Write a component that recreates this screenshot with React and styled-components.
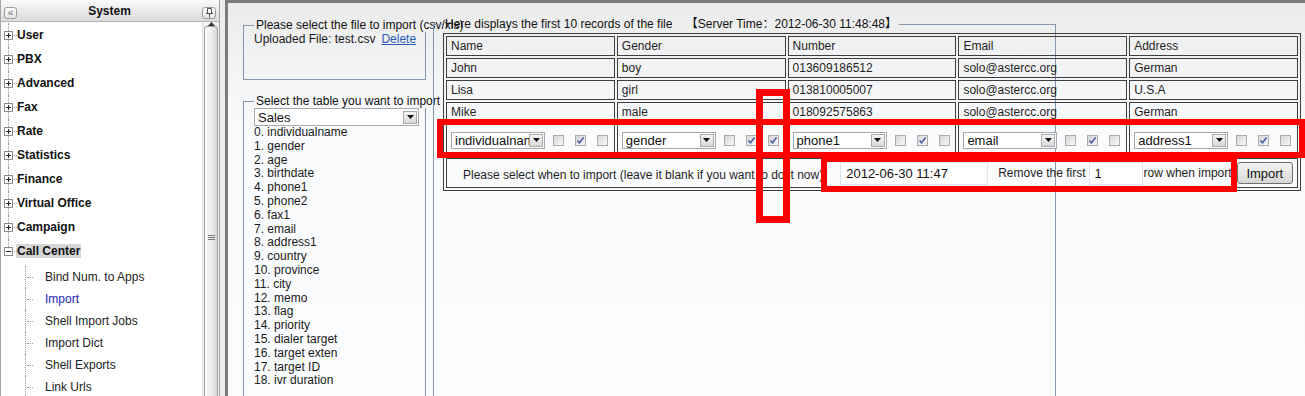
import React from 'react';
import styled, { createGlobalStyle } from 'styled-components';

const GlobalStyle = createGlobalStyle`
  html, body {
    margin: 0;
    padding: 0;
    background: #ffffff;
  }
  body {
    font-family: "Liberation Sans", Arial, "Noto Sans CJK SC", sans-serif;
    font-size: 12px;
    color: #1a1a1a;
  }
`;

const Page = styled.div`
  position: relative;
  display: flex;
  width: 1305px;
  height: 396px;
  overflow: hidden;
`;

/* ---------- sidebar ---------- */

const Sidebar = styled.div`
  width: 220px;
  flex-shrink: 0;
  display: flex;
  flex-direction: column;
  box-sizing: border-box;
  border-left: 1px solid #a6a6a6;
  border-right: 1px solid #a6a6a6;
  background: #ffffff;
`;

const SideHeader = styled.div`
  height: 22px;
  flex-shrink: 0;
  box-sizing: border-box;
  display: flex;
  align-items: center;
  padding: 0 3px 0 3px;
  background: linear-gradient(#fafafa, #e9e9e9 55%, #dcdcdc);
  border-bottom: 1px solid #b4b4b4;
`;

const HeadButton = styled.div`
  width: ${p => p.$w || 13}px;
  height: 12px;
  margin-top: 4px;
  box-sizing: border-box;
  border: 1px solid #9c9c9c;
  border-radius: 3px;
  background: linear-gradient(#ffffff, #e4e4e4);
  display: flex;
  align-items: center;
  justify-content: center;
  color: #6a6a6a;
  font-size: 10px;
  line-height: 1;
`;

const SideTitle = styled.div`
  flex: 1;
  text-align: center;
  font-weight: bold;
  font-size: 12px;
  color: #111;
`;

const SideBody = styled.div`
  flex: 1;
  display: flex;
  min-height: 0;
`;

const Tree = styled.div`
  flex: 1;
  position: relative;
  padding-top: 1px;
`;

const TreeRow = styled.div`
  position: relative;
  height: 24px;
  display: flex;
  align-items: center;
  padding-left: 3px;

  &::before {
    content: '';
    position: absolute;
    left: 7px;
    top: 0;
    height: ${p => (p.$last ? '50%' : '100%')};
    border-left: 1px dotted #9a9a9a;
  }
  &::after {
    content: '';
    position: absolute;
    left: 11px;
    width: 5px;
    top: 50%;
    border-top: 1px dotted #9a9a9a;
  }
`;

const ExpandBox = styled.span`
  position: relative;
  z-index: 1;
  width: 9px;
  height: 9px;
  box-sizing: border-box;
  border: 1px solid #8a8a8a;
  background: #ffffff;
  display: flex;
  align-items: center;
  justify-content: center;
`;

const TreeLabel = styled.span`
  margin-left: 3px;
  padding: 0 1px;
  font-weight: bold;
  font-size: 12px;
  color: #111;
  background: ${p => (p.$selected ? '#d6d6d6' : 'transparent')};
  line-height: 14px;
`;

const ChildList = styled.div`
  padding-top: 3px;
`;

const ChildRow = styled.div`
  position: relative;
  height: 22px;
  display: flex;
  align-items: center;
  padding-left: 44px;
  font-size: 12px;
  color: ${p => (p.$active ? '#2323b4' : '#222')};

  &::before {
    content: '';
    position: absolute;
    left: 24px;
    top: 0;
    height: 100%;
    border-left: 1px dotted #9a9a9a;
  }
  &::after {
    content: '';
    position: absolute;
    left: 26px;
    width: 6px;
    top: 50%;
    border-top: 1px dotted #9a9a9a;
  }
`;

const Scrollbar = styled.div`
  width: 16px;
  flex-shrink: 0;
  display: flex;
  flex-direction: column;
  align-items: center;
  background: #f1f1f1;
  border-left: 1px solid #e2e2e2;
`;

const ScrollArrow = styled.div`
  height: 19px;
  width: 100%;
  display: flex;
  align-items: center;
  justify-content: center;
`;

const ScrollThumb = styled.div`
  width: 14px;
  height: 422px;
  flex-shrink: 0;
  box-sizing: border-box;
  border: 1px solid #9d9d9d;
  border-radius: 3px;
  background: linear-gradient(to right, #fbfbfb, #ececec 55%, #d6d6d6);
  display: flex;
  align-items: center;
  justify-content: center;
`;

const Splitter = styled.div`
  width: 5px;
  flex-shrink: 0;
  background: #ececec;
`;

/* ---------- main ---------- */

const Main = styled.div`
  flex: 1;
  display: flex;
  align-items: flex-start;
  border-top: 3px solid #7b7b7b;
  border-left: 3px solid #7b7b7b;
  padding: 15px 0 0 15px;
  background: linear-gradient(#ebebeb, #f2f3f4 60px, #fafbfd 130px, #fbfcfe);
  overflow: hidden;
`;

const LeftCol = styled.div`
  width: 183px;
  flex-shrink: 0;
  display: flex;
  flex-direction: column;
`;

const Fieldset = styled.fieldset`
  margin: 0;
  min-width: 0;
  box-sizing: border-box;
  border: 1px solid #8797ab;
  padding: 0 10px 8px;
  width: ${p => p.$w}px;
  height: ${p => p.$h}px;
  flex-shrink: 0;
`;

const Legend = styled.legend`
  padding: 0 2px;
  white-space: nowrap;
  font-size: 12px;
  line-height: 14px;
  color: #111;
`;

const TextLine = styled.div`
  font-size: 12px;
  line-height: 14px;
  white-space: nowrap;
`;

const LinkText = styled.a`
  margin-left: 6px;
  color: #2b5cb8;
  text-decoration: underline;
  cursor: pointer;
`;

const FieldList = styled.div`
  font-size: 12px;
  line-height: 13.8px;
  color: #1a1a1a;
  white-space: nowrap;
`;

const PreviewBox = styled(Fieldset)`
  margin-left: 7px;
  margin-top: -1px;
  padding-left: 9px;
`;

const DataTable = styled.table`
  width: 858px;
  margin-top: 2px;
  table-layout: fixed;
  border-collapse: separate;
  border-spacing: 2px;
  border: 1px solid #3e3e3e;
  font-size: 12px;
  color: #1f1f1f;
`;

const Cell = styled.td`
  box-sizing: border-box;
  height: ${p => p.$h || 20}px;
  border: 1px solid #3e3e3e;
  padding: 0 4px;
  vertical-align: middle;
  white-space: nowrap;
  overflow: hidden;
`;

const MapCell = styled.div`
  display: flex;
  align-items: center;
`;

const SelectBox = styled.div`
  width: ${p => p.$w}px;
  height: ${p => p.$h}px;
  flex-shrink: 0;
  box-sizing: border-box;
  border: 1px solid #a5a8ae;
  background: #ffffff;
  display: flex;
  align-items: center;
  font-size: 13px;
  color: #111;
`;

const SelectText = styled.span`
  flex: 1;
  min-width: 0;
  padding-left: 3px;
  overflow: hidden;
  white-space: nowrap;
`;

const DropButton = styled.span`
  width: 14px;
  height: 13px;
  margin-right: 1px;
  flex-shrink: 0;
  box-sizing: border-box;
  border: 1px solid #a9a9a9;
  background: linear-gradient(#f4f4f4, #d9d9d9);
  display: flex;
  align-items: center;
  justify-content: center;
`;

const CheckBox = styled.span`
  width: 11px;
  height: 11px;
  flex-shrink: 0;
  box-sizing: border-box;
  margin-left: ${p => (p.$first ? 8 : 11)}px;
  border: 1px solid #ababab;
  background: linear-gradient(135deg, #d6d6d6, #f9f9f9);
  display: flex;
  align-items: center;
  justify-content: center;
`;

const ImportBar = styled.div`
  display: flex;
  align-items: center;
  padding-left: 12px;
  font-size: 12px;
`;

const TextInput = styled.div`
  width: ${p => p.$w}px;
  height: 23px;
  margin-left: ${p => p.$ml}px;
  flex-shrink: 0;
  box-sizing: border-box;
  border: 1px solid #e1e2e8;
  background: #ffffff;
  display: flex;
  align-items: center;
  padding-left: 5px;
  font-size: 13px;
  color: #111;
`;

const Spacer = styled.span`
  margin-left: ${p => p.$ml}px;
`;

const ImportButton = styled.button`
  margin-left: 5px;
  width: 57px;
  height: 22px;
  box-sizing: border-box;
  border: 1px solid #707070;
  border-radius: 3px;
  background: linear-gradient(#f3f3f3, #e6e6e6 50%, #d6d6d6);
  font-family: "Liberation Sans", Arial, sans-serif;
  font-size: 13px;
  color: #111;
  padding: 0;
`;

// annotation boxes drawn on top of the screenshot
const Marker = styled.div`
  position: absolute;
  box-sizing: border-box;
  border: ${p => p.$t}px solid #ff0000;
  pointer-events: none;
`;

const ArrowDown = () => (
  <svg width="7" height="4" viewBox="0 0 7 4">
    <path d="M0 0h7L3.5 4z" fill="#111" />
  </svg>
);

const Tick = () => (
  <svg width="9" height="9" viewBox="0 0 9 9">
    <path d="M1.5 4.5l2 2.2L7.6 1.6" fill="none" stroke="#4a5ea8" strokeWidth="1.6" />
  </svg>
);

const PlusMinus = ({ open }) => (
  <svg width="7" height="7" viewBox="0 0 7 7">
    <path d={open ? 'M1 3.5h5' : 'M1 3.5h5M3.5 1v5'} stroke="#222" strokeWidth="1" />
  </svg>
);

const PinIcon = () => (
  <svg width="9" height="10" viewBox="0 0 9 10">
    <path d="M2.5 0.5h4v5h-4z" fill="none" stroke="#555" />
    <path d="M1 5.5h7M4.5 5.5v4" stroke="#555" />
  </svg>
);

const menus = ['User', 'PBX', 'Advanced', 'Fax', 'Rate', 'Statistics', 'Finance', 'Virtual Office', 'Campaign'];
const subMenus = ['Bind Num. to Apps', 'Import', 'Shell Import Jobs', 'Import Dict', 'Shell Exports', 'Link Urls'];

const fields = [
  'individualname', 'gender', 'age', 'birthdate', 'phone1', 'phone2', 'fax1', 'email', 'address1',
  'country', 'province', 'city', 'memo', 'flag', 'priority', 'dialer target', 'target exten',
  'target ID', 'ivr duration',
];

const headers = ['Name', 'Gender', 'Number', 'Email', 'Address'];
const records = [
  ['John', 'boy', '013609186512', 'solo@astercc.org', 'German'],
  ['Lisa', 'girl', '013810005007', 'solo@astercc.org', 'U.S.A'],
  ['Mike', 'male', '018092575863', 'solo@astercc.org', 'German'],
];
const mappings = [
  { field: 'individualname', checks: [false, true, false] },
  { field: 'gender', checks: [false, true, true] },
  { field: 'phone1', checks: [false, true, false] },
  { field: 'email', checks: [false, true, false] },
  { field: 'address1', checks: [false, true, false] },
];

const Select = ({ value, w, h }) => (
  <SelectBox $w={w} $h={h}>
    <SelectText>{value}</SelectText>
    <DropButton><ArrowDown /></DropButton>
  </SelectBox>
);

export default function App() {
  return (
    <Page>
      <GlobalStyle />
      <Sidebar>
        <SideHeader>
          <HeadButton>«</HeadButton>
          <SideTitle>System</SideTitle>
          <HeadButton $w={14}><PinIcon /></HeadButton>
        </SideHeader>
        <SideBody>
          <Tree>
            {menus.map(m => (
              <TreeRow key={m}>
                <ExpandBox><PlusMinus /></ExpandBox>
                <TreeLabel>{m}</TreeLabel>
              </TreeRow>
            ))}
            <TreeRow $last>
              <ExpandBox><PlusMinus open /></ExpandBox>
              <TreeLabel $selected>Call Center</TreeLabel>
            </TreeRow>
            <ChildList>
              {subMenus.map(s => (
                <ChildRow key={s} $active={s === 'Import'}>{s}</ChildRow>
              ))}
            </ChildList>
          </Tree>
          <Scrollbar>
            <ScrollArrow>
              <svg width="7" height="4" viewBox="0 0 7 4"><path d="M0 4h7L3.5 0z" fill="#333" /></svg>
            </ScrollArrow>
            <ScrollThumb>
              <svg width="7" height="7" viewBox="0 0 7 7">
                <path d="M0 1.5h7M0 3.5h7M0 5.5h7" stroke="#777" strokeWidth="1" />
              </svg>
            </ScrollThumb>
          </Scrollbar>
        </SideBody>
      </Sidebar>
      <Splitter />
      <Main>
        <LeftCol>
          <Fieldset $w={183} $h={62}>
            <Legend>Please select the file to import (csv/xls)</Legend>
            <TextLine>
              Uploaded File: test.csv<LinkText>Delete</LinkText>
            </TextLine>
          </Fieldset>
          <Fieldset $w={183} $h={330} style={{ marginTop: 14 }}>
            <Legend>Select the table you want to import</Legend>
            <Select value="Sales" w={165} h={18} />
            <FieldList>
              {fields.map((f, i) => (
                <div key={f}>{i}. {f}</div>
              ))}
            </FieldList>
          </Fieldset>
        </LeftCol>
        <PreviewBox $w={623} $h={420}>
          <Legend>
            Here displays the first 10 records of the file&nbsp;&nbsp;&nbsp;&nbsp;【Server Time：2012-06-30 11:48:48】
          </Legend>
          <DataTable>
            <tbody>
              <tr>
                {headers.map(h => <Cell key={h}>{h}</Cell>)}
              </tr>
              {records.map(r => (
                <tr key={r[0]}>
                  {r.map((v, i) => <Cell key={i}>{v}</Cell>)}
                </tr>
              ))}
              <tr>
                {mappings.map(m => (
                  <Cell key={m.field} $h={32}>
                    <MapCell>
                      <Select value={m.field} w={94} h={17} />
                      {m.checks.map((on, i) => (
                        <CheckBox key={i} $first={i === 0}>{on && <Tick />}</CheckBox>
                      ))}
                    </MapCell>
                  </Cell>
                ))}
              </tr>
              <tr>
                <Cell colSpan={5} $h={30}>
                  <ImportBar>
                    <span>Please select when to import (leave it blank if you want to do it now)：</span>
                    <TextInput $w={148} $ml={5}>2012-06-30 11:47</TextInput>
                    <Spacer $ml={10}>Remove the first</Spacer>
                    <TextInput $w={54} $ml={3}>1</TextInput>
                    <Spacer $ml={1}>row when import</Spacer>
                    <ImportButton>Import</ImportButton>
                  </ImportBar>
                </Cell>
              </tr>
            </tbody>
          </DataTable>
        </PreviewBox>
      </Main>

      <Marker $t={6} style={{ left: 437, top: 119, width: 868, height: 39 }} />
      <Marker $t={7} style={{ left: 756, top: 89, width: 34, height: 134 }} />
      <Marker $t={6} style={{ left: 821, top: 156, width: 416, height: 36 }} />
    </Page>
  );
}
